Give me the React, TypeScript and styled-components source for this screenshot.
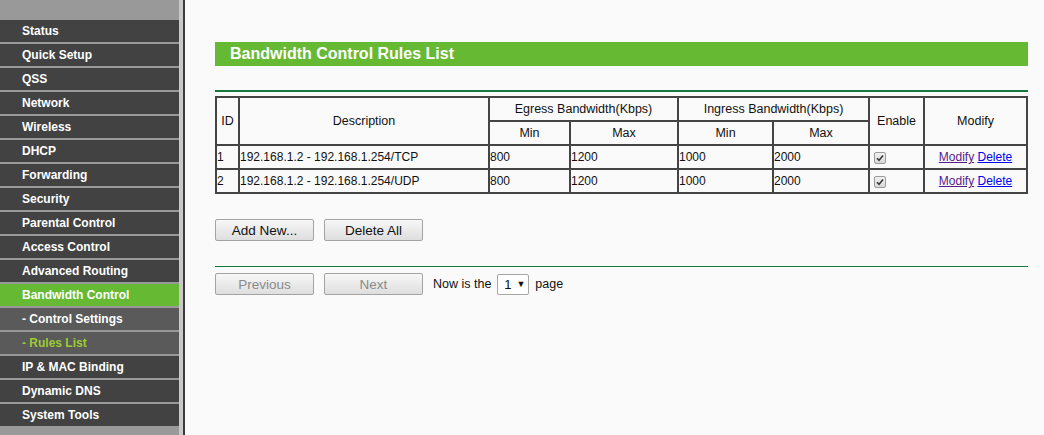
import React from 'react';
import styled, { createGlobalStyle } from 'styled-components';

interface MenuEntry {
  label: string;
  sub?: boolean;
  active?: boolean;
  current?: boolean;
}

const menu: MenuEntry[] = [
  { label: 'Status' },
  { label: 'Quick Setup' },
  { label: 'QSS' },
  { label: 'Network' },
  { label: 'Wireless' },
  { label: 'DHCP' },
  { label: 'Forwarding' },
  { label: 'Security' },
  { label: 'Parental Control' },
  { label: 'Access Control' },
  { label: 'Advanced Routing' },
  { label: 'Bandwidth Control', active: true },
  { label: '- Control Settings', sub: true },
  { label: '- Rules List', sub: true, current: true },
  { label: 'IP & MAC Binding' },
  { label: 'Dynamic DNS' },
  { label: 'System Tools' },
];

const rules = [
  { id: 1, desc: '192.168.1.2 - 192.168.1.254/TCP', eMin: 800, eMax: 1200, iMin: 1000, iMax: 2000 },
  { id: 2, desc: '192.168.1.2 - 192.168.1.254/UDP', eMin: 800, eMax: 1200, iMin: 1000, iMax: 2000 },
];

const colWidths = [23, 250, 81, 108, 95, 96, 55, 103];

const GREEN = '#66b933';

const App: React.FC = () => (
  <>
    <GlobalStyle />
    <Page>
      <Rail>
        <Menu>
          {menu.map((item) => (
            <MenuItem key={item.label} $sub={item.sub} $active={item.active} $current={item.current}>
              {item.label}
            </MenuItem>
          ))}
        </Menu>
      </Rail>

      <Content>
        <Inner>
          <TitleBar>Bandwidth Control Rules List</TitleBar>
          <Rule $thick />

          <RulesTable>
            <colgroup>
              {colWidths.map((w, i) => (
                <col key={i} style={{ width: w }} />
              ))}
            </colgroup>
            <thead>
              <tr>
                <Th rowSpan={2}>ID</Th>
                <Th rowSpan={2}>Description</Th>
                <Th colSpan={2}>Egress Bandwidth(Kbps)</Th>
                <Th colSpan={2}>Ingress Bandwidth(Kbps)</Th>
                <Th rowSpan={2}>Enable</Th>
                <Th rowSpan={2}>Modify</Th>
              </tr>
              <tr>
                <Th>Min</Th>
                <Th>Max</Th>
                <Th>Min</Th>
                <Th>Max</Th>
              </tr>
            </thead>
            <tbody>
              {rules.map((r) => (
                <tr key={r.id}>
                  <Td>{r.id}</Td>
                  <Td>{r.desc}</Td>
                  <Td>{r.eMin}</Td>
                  <Td>{r.eMax}</Td>
                  <Td>{r.iMin}</Td>
                  <Td>{r.iMax}</Td>
                  <Td>
                    <CheckBox>
                      <svg width="8" height="8" viewBox="0 0 8 8">
                        <path d="M1 4.2 L3.1 6.3 L7 1.6" fill="none" stroke="#3a3a3a" strokeWidth="1.6" />
                      </svg>
                    </CheckBox>
                  </Td>
                  <Td $center>
                    <Link href="#" $visited>Modify</Link> <Link href="#">Delete</Link>
                  </Td>
                </tr>
              ))}
            </tbody>
          </RulesTable>

          <ButtonRow>
            <Button>Add New...</Button>
            <Button>Delete All</Button>
          </ButtonRow>

          <Rule />

          <Pager>
            <Button disabled>Previous</Button>
            <Button disabled>Next</Button>
            <PagerText>Now is the</PagerText>
            <PageSelect>
              <span>1</span>
              <Arrow>▼</Arrow>
            </PageSelect>
            <PagerText>page</PagerText>
          </Pager>
        </Inner>
      </Content>
    </Page>
  </>
);

export default App;

const GlobalStyle = createGlobalStyle`
  html, body {
    margin: 0;
    padding: 0;
    background: #fafafa;
    font-family: "Liberation Sans", Arial, sans-serif;
  }
`;

const Page = styled.div`
  display: flex;
  min-height: 100vh;
`;

const Rail = styled.div`
  flex-shrink: 0;
  display: flex;
  border-right: 2px solid #3a3a3a;
`;

const Menu = styled.ul`
  margin: 0;
  padding: 20px 0 0;
  list-style: none;
  width: 179px;
  background: #999999;
  border-right: 4px solid #c8c8c8;
`;

const MenuItem = styled.li<{ $sub?: boolean; $active?: boolean; $current?: boolean }>`
  height: 22px;
  margin-bottom: 2px;
  padding-left: 22px;
  line-height: 22px;
  font-size: 12px;
  font-weight: bold;
  color: ${({ $current }) => ($current ? '#9ccc34' : '#ffffff')};
  background: ${({ $sub, $active }) => ($active ? GREEN : $sub ? '#5a5a5a' : '#424242')};
  white-space: nowrap;
`;

const Content = styled.main`
  flex: 1;
  padding: 42px 0 0 30px;
`;

const Inner = styled.div`
  width: 813px;
`;

const TitleBar = styled.h1`
  margin: 0;
  height: 24px;
  padding-left: 15px;
  line-height: 24px;
  background: ${GREEN};
  color: #ffffff;
  font-size: 16px;
  font-weight: bold;
`;

const Rule = styled.div<{ $thick?: boolean }>`
  height: ${({ $thick }) => ($thick ? '2px' : '1px')};
  margin-top: ${({ $thick }) => ($thick ? '24px' : '25px')};
  background: #157a3d;
`;

const RulesTable = styled.table`
  margin-top: 4px;
  width: 813px;
  table-layout: fixed;
  border-collapse: separate;
  border-spacing: 0;
  border: 1px solid #444444;
  font-size: 12px;
  color: #111111;
`;

const Th = styled.th`
  box-sizing: border-box;
  height: 24px;
  padding: 0;
  border: 1px solid #444444;
  font-size: 12.5px;
  font-weight: normal;
  text-align: center;
  vertical-align: middle;
`;

const Td = styled.td<{ $center?: boolean }>`
  box-sizing: border-box;
  height: 24px;
  padding: 0;
  border: 1px solid #444444;
  text-align: ${({ $center }) => ($center ? 'center' : 'left')};
  vertical-align: middle;
  white-space: nowrap;
`;

const CheckBox = styled.span`
  display: inline-flex;
  align-items: center;
  justify-content: center;
  box-sizing: border-box;
  width: 12px;
  height: 12px;
  margin-left: 4px;
  vertical-align: middle;
  border: 1px solid #9a9a9a;
  border-radius: 2px;
  background: linear-gradient(#f2f2f2, #d8d8d8);
`;

const Link = styled.a<{ $visited?: boolean }>`
  color: ${({ $visited }) => ($visited ? '#551a8b' : '#0000ee')};
  text-decoration: underline;
`;

const ButtonRow = styled.div`
  display: flex;
  gap: 10px;
  margin-top: 25px;
`;

const Button = styled.button`
  box-sizing: border-box;
  width: 99px;
  height: 22px;
  padding: 0;
  border: 1px solid #a3a3a3;
  border-radius: 2px;
  background: linear-gradient(#f7f7f7, #dedede);
  font-family: "Liberation Sans", Arial, sans-serif;
  font-size: 13.5px;
  color: #111111;

  &:disabled {
    color: #8a8a8a;
  }
`;

const Pager = styled.div`
  display: flex;
  align-items: center;
  gap: 10px;
  margin-top: 6px;
`;

const PagerText = styled.span`
  font-size: 12.5px;
  color: #111111;
`;

const PageSelect = styled.div`
  box-sizing: border-box;
  display: flex;
  align-items: center;
  gap: 5px;
  width: 32px;
  height: 21px;
  margin: 0 -4px;
  padding-left: 6px;
  border: 1px solid #a6a6a6;
  border-radius: 2px;
  background: #ffffff;
  font-size: 13px;
  color: #111111;
`;

const Arrow = styled.span`
  font-size: 9px;
`;
